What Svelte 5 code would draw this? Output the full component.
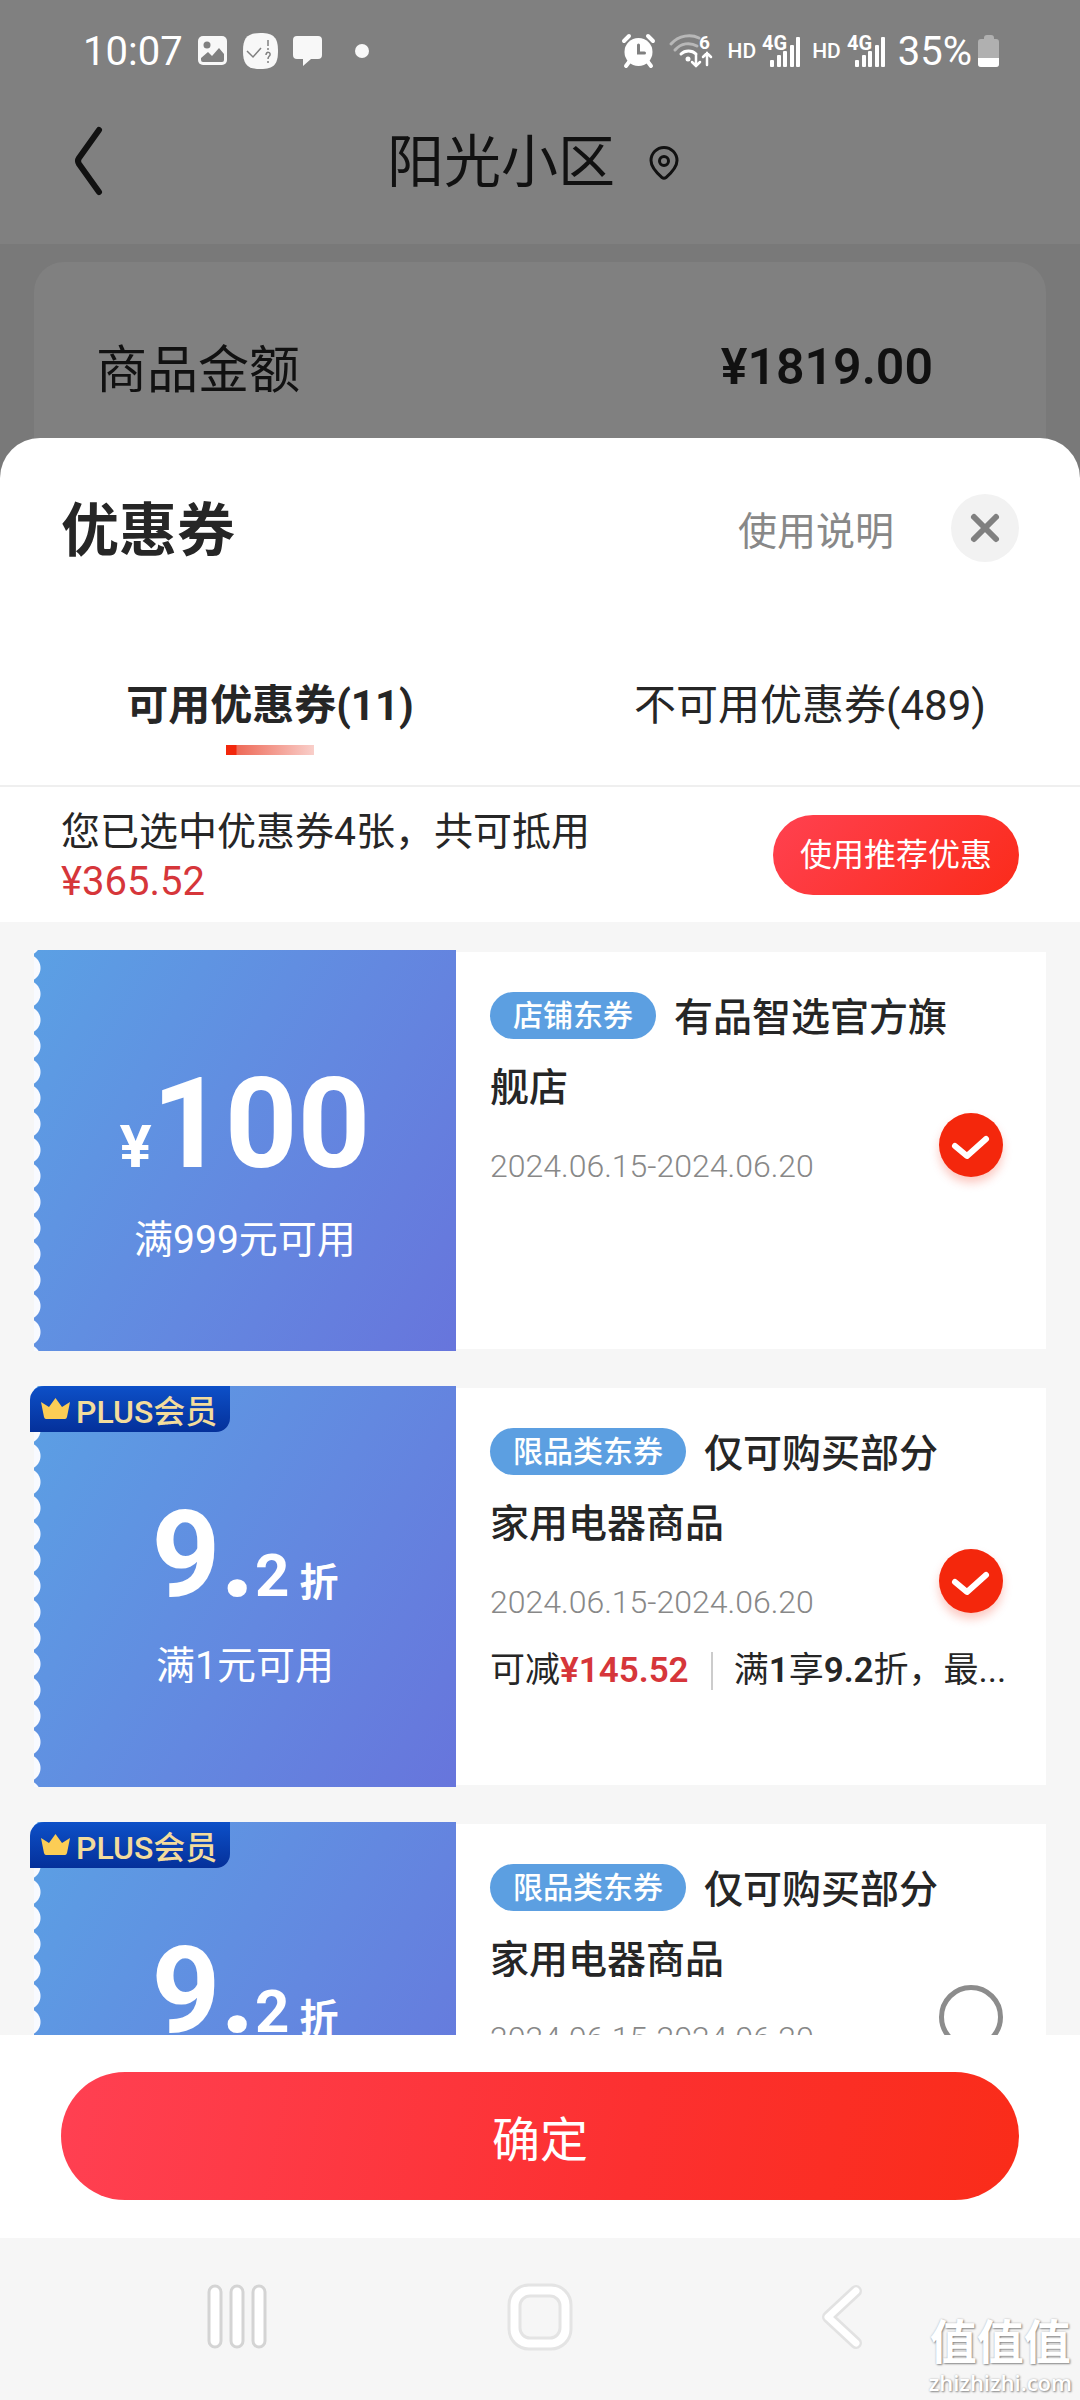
<script>
let tab = $state('usable')

let coupons = $state([
  {
    plus: false,
    kind: 'cash',
    amount: '100',
    condition: '满999元可用',
    tag: '店铺东券',
    title: '有品智选官方旗舰店',
    date: '2024.06.15-2024.06.20',
    checked: true,
  },
  {
    plus: true,
    kind: 'discount',
    amount: '9',
    decimal: '2',
    condition: '满1元可用',
    tag: '限品类东券',
    title: '仅可购买部分家用电器商品',
    date: '2024.06.15-2024.06.20',
    saving: '¥145.52',
    checked: true,
  },
  {
    plus: true,
    kind: 'discount',
    amount: '9',
    decimal: '2',
    condition: '满1元可用',
    tag: '限品类东券',
    title: '仅可购买部分家用电器商品',
    date: '2024.06.15-2024.06.20',
    saving: '¥145.52',
    checked: false,
  },
])
</script>

{#snippet signal()}
  <span class="hd">HD</span>
  <svg class="signal" width="39" height="34" viewBox="0 0 39 34">
    <text x="0" y="16" font-size="20" font-weight="700" fill="#fff">4G</text>
    <g fill="#fff">
      <rect x="8" y="26" width="4" height="7" rx="1" />
      <rect x="15" y="21" width="4" height="12" rx="1" />
      <rect x="21" y="17" width="4" height="16" rx="1" />
      <rect x="28" y="11" width="4" height="22" rx="1" />
      <rect x="34" y="3" width="4" height="30" rx="1" />
    </g>
  </svg>
{/snippet}

<div class="page">
  <div class="top">
    <div class="status">
      <span class="clock">10:07</span>
      <svg width="30" height="30" viewBox="0 0 30 30">
        <rect width="29" height="29" rx="5" fill="#f8f8f8" />
        <circle cx="9" cy="9" r="3.5" fill="#808080" />
        <path d="M3 22l7-6 4 4 7-8 5 6v6a2 2 0 0 1-2 2H5a2 2 0 0 1-2-2z" fill="#808080" />
      </svg>
      <svg width="35" height="36" viewBox="0 0 35 36">
        <path d="M17.500 0C31 0 35 5 35 18s-4 18-17.500 18S0 31 0 18 4 0 17.500 0z" fill="#f8f8f8" />
        <path d="M4 18l6 6 8-9" fill="none" stroke="#808080" stroke-width="1.500" />
        <path d="M25 7v6M25 15v2M23 22c0-4 5-3 4 0-.5 1.500-2 1.500-2 4M25 28v2" fill="none" stroke="#808080" stroke-width="1.500" />
      </svg>
      <svg width="30" height="32" viewBox="0 0 30 32">
        <path d="M4 1h21a4 4 0 0 1 4 4v15a4 4 0 0 1-4 4h-7l-8 7v-7H4a4 4 0 0 1-4-4V5a4 4 0 0 1 4-4z" fill="#f8f8f8" />
      </svg>
      <svg class="dot" width="14" height="14" viewBox="0 0 14 14">
        <circle cx="7" cy="7" r="7" fill="#f8f8f8" />
      </svg>

      <div class="right">
        <svg width="33" height="34" viewBox="0 0 33 34">
          <circle cx="16.500" cy="18" r="14" fill="#fff" />
          <path d="M2 7l5-5M31 7l-5-5M7 28l-3 4M26 28l3 4" stroke="#fff" stroke-width="4" stroke-linecap="round" />
          <path d="M16.500 11v8h6" fill="none" stroke="#808080" stroke-width="3" stroke-linecap="round" />
        </svg>
        <svg class="wifi" width="44" height="34" viewBox="0 0 44 34">
          <g fill="none" stroke-linecap="round" stroke-width="3">
            <path d="M2 10c8-9 20-10 28-6" stroke="#b8b8b8" />
            <path d="M6 16c6-7 15-8 22-4" stroke="#b8b8b8" />
            <path d="M12 20c4-4 11-4 15 0" stroke="#fff" />
            <path d="M27 21v11M23 28l4 4 4-4M38 31V19M34 23l4-4 4 4" stroke="#fff" stroke-width="2.500" />
          </g>
          <circle cx="19" cy="25" r="2.500" fill="#fff" />
          <text x="30" y="15" font-size="19" font-weight="700" fill="#fff">6</text>
        </svg>
        {@render signal()}
        {@render signal()}
        <span class="percent">35%</span>
        <svg width="22" height="33" viewBox="0 0 22 33">
          <path d="M6 3a3 3 0 0 1 3-3h4a3 3 0 0 1 3 3v1h2a3 3 0 0 1 3 3v22a3 3 0 0 1-3 3H3a3 3 0 0 1-3-3V7a3 3 0 0 1 3-3h3z" fill="#b0b0b0" />
          <path d="M0 23h21v6a3 3 0 0 1-3 3H3a3 3 0 0 1-3-3z" fill="#fff" />
        </svg>
      </div>
    </div>

    <header>
      <button class="back" aria-label="返回">
        <svg width="56" height="72" viewBox="0 0 56 72">
          <path d="M38 5L18 33q-2 3 0 6l20 28" fill="none" stroke="#111" stroke-width="6" stroke-linecap="round" stroke-linejoin="round" />
        </svg>
      </button>
      <div class="place">
        <h1>阳光小区</h1>
        <svg width="30" height="34" viewBox="0 0 30 34">
          <path d="M15 1.500A13 13 0 0 0 2 14.500C2 22 9 28 13 31.500q2 1.500 4 0C21 28 28 22 28 14.500A13 13 0 0 0 15 1.500z" fill="none" stroke="#111" stroke-width="3" />
          <circle cx="15" cy="15" r="4.500" fill="none" stroke="#111" stroke-width="3" />
        </svg>
      </div>
    </header>
  </div>

  <div class="order">
    <span>商品金额</span>
    <b>¥1819.00</b>
  </div>

  <section class="sheet">
    <div class="head">
      <h2>优惠券</h2>
      <a href="#help">使用说明</a>
      <button class="close" aria-label="关闭">
        <svg width="30" height="30" viewBox="0 0 30 30">
          <path d="M4 4l22 22M26 4L4 26" stroke="#808080" stroke-width="6" stroke-linecap="round" />
        </svg>
      </button>
    </div>

    <div class="tabs" role="tablist">
      <button role="tab" class:active={tab === 'usable'} aria-selected={tab === 'usable'} onclick={() => (tab = 'usable')}>
        可用优惠券(11)
      </button>
      <button role="tab" class:active={tab === 'other'} aria-selected={tab === 'other'} onclick={() => (tab = 'other')}>
        不可用优惠券(489)
      </button>
    </div>

    <div class="summary">
      <div>
        <p>您已选中优惠券4张，共可抵用</p>
        <p class="total">¥365.52</p>
      </div>
      <button>使用推荐优惠</button>
    </div>

    <div class="list">
      {#each coupons as coupon, i}
        <article class="coupon">
          <div class="face">
            {#if coupon.plus}
              <div class="plus">
                <svg width="29" height="22" viewBox="0 0 29 22">
                  <path d="M0 4l8 5 6.500-9L21 9l8-5-3 15q-.5 2-2 2H5q-1.500 0-2-2z" fill="#fccd55" />
                </svg>
                PLUS会员
              </div>
            {/if}
            {#if coupon.kind === 'cash'}
              <div class="amount cash"><small>¥</small>{coupon.amount}</div>
            {:else}
              <div class="amount discount">{coupon.amount}.<small>{coupon.decimal}</small><em>折</em></div>
            {/if}
            <div class="condition">{coupon.condition}</div>
          </div>
          <div class="info">
            <h3><span class="tag">{coupon.tag}</span>{coupon.title}</h3>
            <time>{coupon.date}</time>
            <label class="check">
              <input type="checkbox" aria-label={coupon.title + (i + 1)} bind:checked={coupon.checked} />
              <svg width="64" height="64" viewBox="0 0 64 64">
                <path d="M16 33l12 10 19-17" fill="none" stroke="#fff" stroke-width="6" stroke-linecap="round" stroke-linejoin="round" />
              </svg>
            </label>
            {#if coupon.saving}
              <div class="rule">
                <span>可减<b class="red">{coupon.saving}</b></span>
                <span class="detail">满<b>1</b>享<b>9.2</b>折，最...</span>
              </div>
            {/if}
          </div>
        </article>
      {/each}
    </div>

    <div class="footer">
      <button>确定</button>
    </div>
  </section>

  <nav>
    <button aria-label="最近任务">
      <svg width="60" height="66" viewBox="0 0 60 66">
        <g fill="#fff" stroke="#d4d4d4" stroke-width="3">
          <rect x="2" y="2" width="12" height="61" rx="6" />
          <rect x="24" y="2" width="12" height="61" rx="6" />
          <rect x="46" y="2" width="12" height="61" rx="6" />
        </g>
      </svg>
    </button>
    <button aria-label="主屏幕">
      <svg width="66" height="68" viewBox="0 0 66 68">
        <g stroke="#e4e4e4" stroke-width="3">
          <rect x="2" y="2" width="62" height="64" rx="20" fill="#fff" />
          <rect x="13" y="13" width="40" height="42" rx="10" fill="#f6f6f6" />
        </g>
      </svg>
    </button>
    <button aria-label="返回">
      <svg width="44" height="66" viewBox="0 0 44 66">
        <g fill="none" stroke-linecap="round" stroke-linejoin="round">
          <path d="M35 7L7 33l28 26" stroke="#e2e2e2" stroke-width="12" />
          <path d="M35 7L7 33l28 26" stroke="#fff" stroke-width="7" />
        </g>
      </svg>
    </button>
    <div class="mark">
      <strong>值值值</strong>
      <span>zhizhizhi.com</span>
    </div>
  </nav>
</div>

<style>
:global(body) {
  background: #797979;
}
* {
  box-sizing: border-box;
}
.page {
  display: flex;
  flex-direction: column;
  height: 100vh;
  color: #262626;
  font-family: Roboto, "Noto Sans CJK SC", sans-serif;
  background: #797979;
}
button {
  border: 0;
  padding: 0;
  background: none;
  color: inherit;
  font: inherit;
}
h1, h2, h3, p {
  margin: 0;
}
svg {
  display: block;
  flex: none;
  overflow: visible;
}

/* status bar and title */
.top {
  padding-bottom: 22px;
  background: #808080;
}
.status {
  display: flex;
  align-items: center;
  gap: 15px;
  height: 100px;
  padding: 2px 80px 0 83px;
  color: #fff;
  font-size: 40px;
}
.dot {
  margin-left: 17px;
}
.right {
  display: flex;
  align-items: center;
  margin-left: auto;
}
.wifi {
  margin-left: 14px;
}
.hd {
  margin-left: 11px;
  font-size: 21px;
  font-weight: 500;
}
.signal {
  margin-left: 6px;
}
.wifi + .hd {
  margin-left: 15px;
}
.percent {
  margin: 0 6px 0 12px;
}
header {
  display: grid;
  grid-template-columns: 1fr auto 1fr;
  align-items: center;
  height: 122px;
  padding: 0 75px 0 61px;
}
.back {
  justify-self: start;
}
.place {
  display: flex;
  align-items: center;
  gap: 34px;
  padding-top: 4px;
  color: #111;
}
h1 {
  font-size: 57px;
  font-weight: 400;
  line-height: 80px;
}
.order {
  display: flex;
  justify-content: space-between;
  margin: 18px 34px 0;
  padding: 74px 113px 72px 62px;
  border-radius: 30px 30px 0 0;
  background: #808080;
  color: #111;
  font-size: 51px;
  line-height: 70px;
}
.order b {
  font-size: 50px;
  font-weight: 600;
  line-height: 62px;
}

/* coupon sheet */
.sheet {
  position: relative;
  display: flex;
  flex: 1;
  flex-direction: column;
  min-height: 0;
  margin-top: -40px;
  border-radius: 40px 40px 0 0;
  background: #fff;
}
.head {
  display: flex;
  align-items: center;
  padding: 56px 61px 0;
}
h2 {
  flex: 1;
  padding-top: 6px;
  font-size: 58px;
  line-height: 62px;
}
.head a {
  margin-right: 57px;
  color: #888;
  font-size: 39px;
  text-decoration: none;
}
.close {
  display: flex;
  align-items: center;
  justify-content: center;
  width: 68px;
  height: 68px;
  border-radius: 50%;
  background: #f2f2f2;
}
.tabs {
  display: grid;
  grid-template-columns: 1fr 1fr;
  margin-top: 116px;
  border-bottom: 2px solid #efefef;
}
.tabs button {
  display: flex;
  flex-direction: column;
  align-items: center;
  padding-bottom: 30px;
  font-size: 42px;
  line-height: 56px;
}
.tabs button::after {
  width: 88px;
  height: 10px;
  margin-top: 11px;
  content: "";
}
.tabs .active {
  font-weight: 700;
}
.tabs .active::after {
  background: linear-gradient(90deg, #f2270c 0 10px, #ee6a58 11px, #f9cfca);
}
.summary {
  display: flex;
  align-items: center;
  justify-content: space-between;
  padding: 16px 61px 15px;
  font-size: 39px;
  line-height: 50px;
}
.summary div {
  padding-top: 4px;
}
.total {
  color: #d6363a;
  font-size: 40px;
}
.summary button {
  height: 80px;
  padding: 0 27px;
  border-radius: 40px;
  background: linear-gradient(135deg, #ff4150, #fb2b1a);
  color: #fff;
  font-size: 32px;
}

.list {
  display: flex;
  flex: 1;
  flex-direction: column;
  gap: 35px;
  min-height: 0;
  padding: 28px 34px 0;
  overflow: hidden;
  background: #f6f6f6;
}
.coupon {
  display: flex;
  flex: none;
  height: 401px;
}
.face {
  position: relative;
  flex: none;
  width: 422px;
  padding-top: 109px;
  background:
    radial-gradient(circle at -7px 13px, #f8faff 13px, transparent 14px) 0 5px / 10px 26px repeat-y,
    linear-gradient(120deg, #5ba0e4, #6388e0 55%, #6775dc);
  color: #fff;
  text-align: center;
}
.plus {
  position: absolute;
  top: 0;
  left: -4px;
  display: flex;
  align-items: center;
  gap: 6px;
  height: 46px;
  padding: 0 13px 0 11px;
  border-radius: 14px 0 14px 0;
  background: linear-gradient(#0d50c8, #04309a);
  color: #f3dc9c;
  font-size: 32px;
  font-weight: 500;
}
.amount {
  font-weight: 700;
}
.amount small {
  font-size: 60px;
  line-height: 60px;
}
.cash {
  font-size: 127px;
  line-height: 130px;
}
.discount {
  font-size: 120px;
  line-height: 120px;
}
.amount em {
  margin-left: 10px;
  font-size: 39px;
  font-style: normal;
  line-height: 39px;
}
.condition {
  margin-top: 24px;
  font-size: 39px;
  line-height: 54px;
}
.info {
  display: grid;
  flex: 1;
  grid-template-columns: 1fr 64px;
  align-content: start;
  min-width: 0;
  margin: 2px 0;
  padding: 31px 43px 0 34px;
  background: #fff;
}
h3 {
  grid-area: 1 / 1 / 2 / 3;
  padding-right: 40px;
  font-size: 39px;
  font-weight: 500;
  line-height: 70px;
}
.tag {
  display: inline-block;
  margin-right: 18px;
  padding: 0 23px;
  border-radius: 24px;
  background: #5c9fe1;
  color: #fff;
  font-size: 30px;
  line-height: 47px;
  vertical-align: 5px;
}
time {
  grid-area: 2 / 1;
  margin-top: 20px;
  color: #888;
  font-size: 32px;
  font-weight: 300;
  line-height: 46px;
}
.check {
  grid-area: 1 / 2 / 3 / 3;
  align-self: end;
  position: relative;
  height: 64px;
  margin-bottom: 12px;
}
.check input {
  display: block;
  width: 64px;
  height: 64px;
  margin: 0;
  appearance: none;
  border: 5px solid #8c8c8c;
  border-radius: 50%;
}
.check input:checked {
  border: 0;
  background: #f4270c;
  box-shadow: 0 6px 10px rgba(244, 39, 12, 0.25);
}
.check svg {
  position: absolute;
  top: 0;
  left: 0;
  visibility: hidden;
}
.check input:checked + svg {
  visibility: visible;
}
.rule {
  display: flex;
  grid-column: 1 / 3;
  align-items: center;
  margin-top: 23px;
  font-size: 35px;
  line-height: 46px;
  white-space: nowrap;
}
.rule b {
  font-weight: 600;
}
.rule .red {
  color: #d6363a;
}
.detail {
  margin-left: 22px;
  padding-left: 21px;
  border-left: 2px solid #ccc;
  line-height: 38px;
}

.footer {
  padding: 37px 61px 38px;
  background: #fff;
}
.footer button {
  width: 100%;
  height: 128px;
  border-radius: 64px;
  background: linear-gradient(100deg, #ff4052, #fc3030 60%, #fa2c19);
  color: #fff;
  font-size: 48px;
}

nav {
  position: relative;
  display: grid;
  grid-template-columns: repeat(3, 1fr);
  align-items: center;
  justify-items: center;
  height: 162px;
  padding: 0 86px 4px;
  background: #f6f6f6;
}
.mark {
  position: absolute;
  right: 8px;
  bottom: 4px;
  display: flex;
  flex-direction: column;
  align-items: center;
  color: #fff;
  text-shadow: 1px 1px 2px #888, 0 0 2px #bbb;
}
.mark strong {
  font-size: 47px;
  line-height: 50px;
}
.mark span {
  font-family: "Open Sans", sans-serif;
  font-size: 22px;
  font-weight: 600;
  line-height: 28px;
}
</style>
